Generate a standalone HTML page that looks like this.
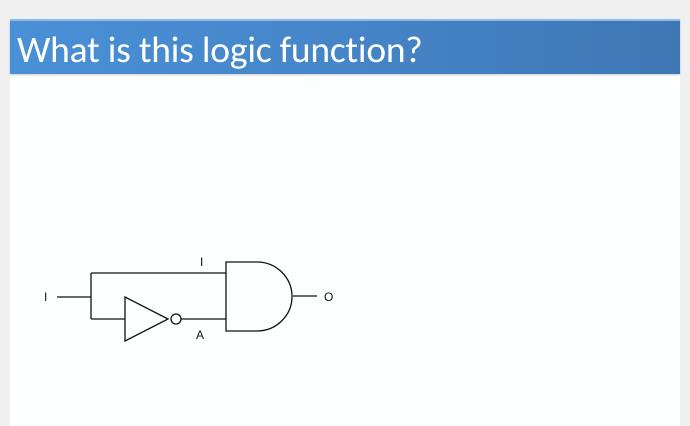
<!DOCTYPE html>
<html><head><style>
html,body{margin:0;padding:0;width:690px;height:426px;overflow:hidden;background:#f0f0f1;}
.panel{position:absolute;left:10px;top:74px;width:670px;height:352px;background:#fdfefe;}
.bar{position:absolute;left:10px;top:19px;width:670px;height:55px;background:linear-gradient(90deg,#4a90d6 0%,#4585c8 50%,#3f77b5 100%);border-top:2px solid #8fbbe6;box-sizing:border-box;box-shadow:0 1px 2px rgba(0,0,0,.2);}
.bar span{position:absolute;left:7px;top:8px;color:#fff;font-family:"Carlito","Liberation Sans",sans-serif;font-size:37.5px;line-height:42px;letter-spacing:-0.2px;}
svg{position:absolute;left:0;top:0;}
</style></head><body>
<div class="panel"></div>
<div class="bar"><span>What is this logic function?</span></div>
<svg width="690" height="426" viewBox="0 0 690 426">
<g fill="none" stroke="#111" stroke-width="1.3">
<path d="M57 297H91M91 273V319M91 273H226M91 319H125"/>
<path d="M125 297L168 319L125 341Z"/>
<circle cx="176" cy="319" r="5"/>
<path d="M181 319H226"/>
<path d="M226 262V331H257A35 34.5 0 0 0 257 262Z"/>
<path d="M293 296H317"/>
</g>
<g font-family="Liberation Sans,sans-serif" font-size="12" fill="#111">
<text x="44" y="301">I</text>
<text x="200" y="266">I</text>
<text x="196" y="339">A</text>
<text x="324" y="301">O</text>
</g>
</svg>
</body></html>
